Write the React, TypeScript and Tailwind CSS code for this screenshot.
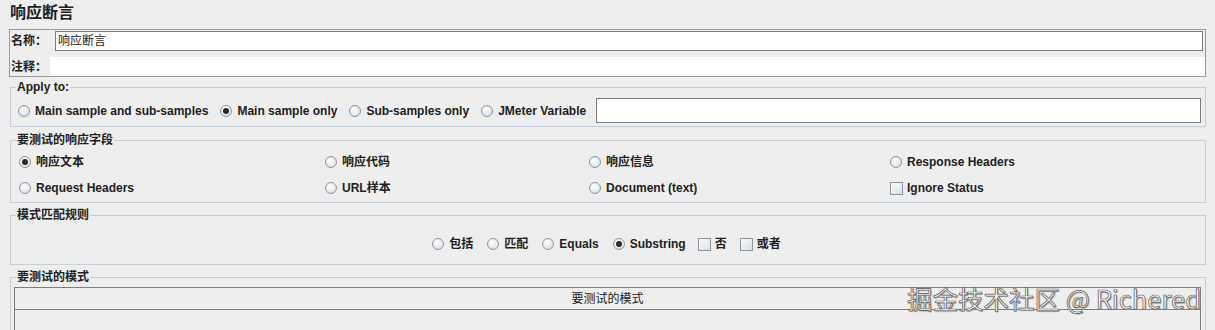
import React from "react";

const base = "font-['Liberation_Sans','Noto_Sans_CJK_SC',sans-serif] text-[12px] font-bold text-[#222]";

function Radio({ checked = false }: { checked?: boolean }) {
  return (
    <span className="flex items-center justify-center w-[12px] h-[12px] shrink-0 rounded-full border border-[#8e98a3] bg-[radial-gradient(circle_at_40%_35%,#ffffff,#e4e8ec_60%,#cfd5db)]">
      {checked && <span className="w-[6px] h-[6px] rounded-full bg-[#2b2b2b]" />}
    </span>
  );
}

function Check() {
  return (
    <span className="w-[13px] h-[13px] shrink-0 border border-[#8e98a3] bg-[linear-gradient(135deg,#fbfcfd,#d9dee4)]" />
  );
}

function Opt({ label, checked = false, box = false }: { label: string; checked?: boolean; box?: boolean }) {
  return (
    <label className={`flex items-center whitespace-nowrap ${box ? "gap-[4px]" : "gap-[5px]"}`}>
      {box ? <Check /> : <Radio checked={checked} />}
      <span>{label}</span>
    </label>
  );
}

function Group({ title, className = "", children }: { title: string; className?: string; children?: React.ReactNode }) {
  return (
    <fieldset className={`ml-[10px] mr-[9px] border border-[#c3d0dc] ${className}`}>
      <legend className="ml-[5px] px-[1px] leading-[14px]">{title}</legend>
      {children}
    </fieldset>
  );
}

export default function App() {
  return (
    <div className={`${base} relative w-[1215px] h-[330px] overflow-hidden bg-[#eeeeee]`}>
      <div className="h-[29px] pl-[10px] text-[16px] leading-[26px] font-semibold">响应断言</div>

      {/* name + comment */}
      <div className="ml-[9px] mr-[9px] border border-[#9c9c9c] pt-[1px]">
        <div className="flex items-center h-[20px]">
          <span className="w-[45px] pl-[1px]">名称：</span>
          <div className="flex-1 h-[20px] mr-[2px] border border-[#7d7d7d] bg-white pl-[2px] leading-[18px] font-normal">
            响应断言
          </div>
        </div>
        <div className="h-[6px]" />
        <div className="flex items-center h-[19px]">
          <span className="w-[40px] pl-[1px]">注释：</span>
          <div className="flex-1 h-full bg-white" />
        </div>
      </div>

      <Group title="Apply to:" className="mt-[3px]">
        <div className="flex items-center gap-[12px] h-[25px] mt-[4px] mb-[3px] pl-[7px] pr-[4px]">
          <Opt label="Main sample and sub-samples" />
          <Opt label="Main sample only" checked />
          <Opt label="Sub-samples only" />
          <Opt label="JMeter Variable" />
          <div className="flex-1 -ml-[2px] h-[25px] border border-[#7d7d7d] bg-white" />
        </div>
      </Group>

      <Group title="要测试的响应字段" className="mt-[6px]">
        <div className="grid grid-cols-[306px_264px_301px_1fr] auto-rows-[26px] items-center pt-[2px] pb-[1px] pl-[8px]">
          <Opt label="响应文本" checked />
          <Opt label="响应代码" />
          <Opt label="响应信息" />
          <Opt label="Response Headers" />
          <Opt label="Request Headers" />
          <Opt label="URL样本" />
          <Opt label="Document (text)" />
          <Opt label="Ignore Status" box />
        </div>
      </Group>

      <Group title="模式匹配规则" className="mt-[5px]">
        <div className="flex items-center justify-center h-[26px] mt-[9px] mb-[7px] pr-[3px]">
          <div className="flex items-center gap-[14px]">
            <Opt label="包括" />
            <Opt label="匹配" />
            <Opt label="Equals" />
            <Opt label="Substring" checked />
          </div>
          <div className="flex items-center gap-[13px] ml-[12px]">
            <Opt label="否" box />
            <Opt label="或者" box />
          </div>
        </div>
      </Group>

      <Group title="要测试的模式" className="mt-[5px] h-[80px]">
        <div className="pt-[3px] pl-[3px] pr-[4px]">
          <div className="border border-[#7d7d7d] h-[60px]">
            <div className="h-[22px] border-b border-[#7d7d7d] flex items-center justify-center font-normal">
              要测试的模式
            </div>
          </div>
        </div>
      </Group>

      <div className="absolute right-[14px] top-[282px] font-['Noto_Sans_CJK_SC',sans-serif] text-[25.5px] leading-[32px] font-normal text-[#f6f6f6] [-webkit-text-stroke:0.7px_#5a5a5a] [text-shadow:1px_1px_1px_#9a9a9a]">
        掘金技术社区 @ Richered
      </div>
    </div>
  );
}
